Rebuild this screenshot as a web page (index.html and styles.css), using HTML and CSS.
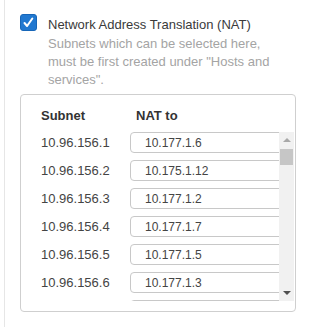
FILE: index.html
```html
<!DOCTYPE html>
<html lang="en">
<head>
  <meta charset="UTF-8" />
  <title>NAT settings</title>
  <link rel="stylesheet" href="styles.css">
</head>
<body>
  <div class="section">
    <div class="option">
      <span class="checkbox">
        <svg viewBox="0 0 18 18"><path d="M4.2 9.6l3.1 3.6L13.6 4.2"/></svg>
      </span>
      <div class="option-text">
        <div class="option-title">Network Address Translation (NAT)</div>
        <div class="option-help">Subnets which can be selected here, must be first created under "Hosts and services".</div>
      </div>
    </div>

    <div class="nat-panel">
      <div class="nat-head">
        <div class="head-subnet">Subnet</div>
        <div>NAT to</div>
      </div>
      <div class="nat-body">
        <div class="nat-list">
          <div class="nat-row"><div class="col-subnet">10.96.156.1</div><input class="nat-input" type="text" value="10.177.1.6"></div>
          <div class="nat-row"><div class="col-subnet">10.96.156.2</div><input class="nat-input" type="text" value="10.175.1.12"></div>
          <div class="nat-row"><div class="col-subnet">10.96.156.3</div><input class="nat-input" type="text" value="10.177.1.2"></div>
          <div class="nat-row"><div class="col-subnet">10.96.156.4</div><input class="nat-input" type="text" value="10.177.1.7"></div>
          <div class="nat-row"><div class="col-subnet">10.96.156.5</div><input class="nat-input" type="text" value="10.177.1.5"></div>
          <div class="nat-row"><div class="col-subnet">10.96.156.6</div><input class="nat-input" type="text" value="10.177.1.3"></div>
          <div class="nat-row"><div class="col-subnet">10.96.156.7</div><input class="nat-input" type="text" value="10.177.1.8"></div>
        </div>
        <div class="scroll-rail">
          <div class="scroll-btn"><span class="arrow-up"></span></div>
          <div class="scroll-thumb"></div>
          <div class="scroll-track"></div>
          <div class="scroll-btn"><span class="arrow-down"></span></div>
        </div>
      </div>
    </div>
  </div>
</body>
</html>
```

FILE: styles.css
```css
* { box-sizing: border-box; }
body {
  margin: 0;
  font-family: "Liberation Sans", Arial, sans-serif;
  background-color: #fff;
  color: #3c3c3c;
}

.section {
  margin-left: 4px;
  border-left: 1px solid #e6e6e6;
  min-height: 327px;
  padding: 14px 0 0 15px;
}

.option {
  display: flex;
  gap: 11px;
}

.checkbox {
  flex: none;
  width: 17px;
  height: 17px;
  border-radius: 3px;
  background-color: #2178d0;
  border: 1px solid #1766b8;
}

.checkbox svg {
  display: block;
  width: 15px;
  height: 15px;
  fill: none;
  stroke: #fff;
  stroke-width: 2.4;
  stroke-linecap: round;
  stroke-linejoin: round;
}

.option-title {
  font-size: 13px;
  line-height: 20px;
  padding-top: 1px;
  color: #3a3a3a;
}

.option-help {
  font-size: 13px;
  line-height: 18px;
  color: #a4a4a4;
  width: 235px;
}

.nat-panel {
  margin-top: 5px;
  width: 276px;
  border: 1px solid #cfcfcf;
  border-radius: 4px;
  padding: 11px 1px 10px 20px;
}

.nat-head {
  display: flex;
  font-size: 13px;
  line-height: 20px;
  font-weight: bold;
  color: #333;
  margin-bottom: 6px;
}

.head-subnet {
  width: 95px;
}

.nat-body {
  display: flex;
  height: 169px;
}

.nat-list {
  flex: 1;
  overflow: hidden;
}

.nat-row {
  display: flex;
  align-items: center;
  height: 28px;
  padding-bottom: 7px;
  font-size: 13px;
  color: #444;
}

.col-subnet {
  width: 89px;
  flex: none;
}

.nat-input {
  flex: none;
  width: 170px;
  height: 21px;
  margin: 0;
  padding: 0 0 0 14px;
  border: 1px solid #c8c8c8;
  border-radius: 4px;
  font-family: inherit;
  font-size: 12px;
  color: #444;
  background-color: #fff;
}

.scroll-rail {
  flex: none;
  width: 15px;
  background-color: #f1f1f1;
  display: flex;
  flex-direction: column;
}

.scroll-btn {
  height: 16px;
  display: flex;
  align-items: center;
  justify-content: center;
}

.arrow-up,
.arrow-down {
  width: 0;
  height: 0;
  border-left: 4px solid transparent;
  border-right: 4px solid transparent;
}

.arrow-up {
  border-bottom: 4px solid #a8a8a8;
}

.arrow-down {
  border-top: 4px solid #505050;
}

.scroll-thumb {
  height: 16px;
  margin: 1px 1px 0;
  background-color: #c6c6c6;
}

.scroll-track {
  flex: 1;
}
```
